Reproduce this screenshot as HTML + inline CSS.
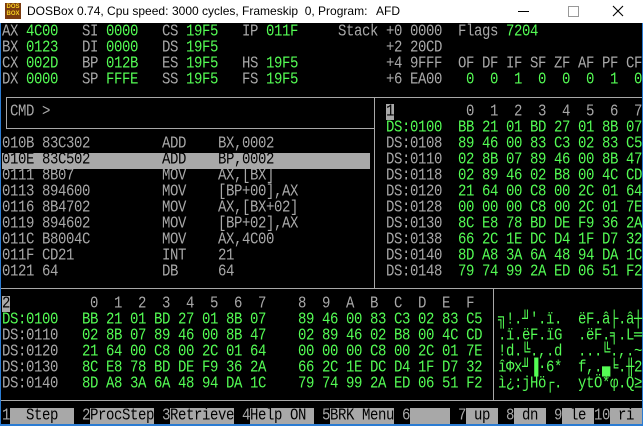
<!DOCTYPE html>
<html><head><meta charset="utf-8">
<style>
html,body{margin:0;padding:0;}
body{width:643px;height:426px;position:relative;overflow:hidden;background:#000;}
#tb{position:absolute;left:0;top:0;width:643px;height:23px;background:#fff;}
.tt{position:absolute;top:4px;font:12px "Liberation Sans","DejaVu Sans",sans-serif;color:#000;white-space:pre;}
.t{position:absolute;height:16px;line-height:16px;font-family:"Liberation Mono","DejaVu Sans Mono",monospace;font-size:14px;letter-spacing:-0.4px;white-space:pre;color:#a8a8a8;transform:scaleY(1.2);transform-origin:0 50%;}
.g{color:#54fc54;}
.k{color:#000;}
.ln{position:absolute;background:#a8a8a8;}
.gb{position:absolute;background:#a8a8a8;height:16px;top:408px;}
.bl{position:absolute;background:#2b7cd3;}
</style></head><body>
<div id="tb">
  <div style="position:absolute;left:5px;top:3px;width:16px;height:16px;background:#7a3b10;"></div>
  <div style="position:absolute;left:6px;top:4px;width:14px;font:bold 6px 'Liberation Sans',sans-serif;color:#f8d020;line-height:7px;text-align:center;">DOS<br>BOX</div>
  <div class="tt" style="left:27px;">DOSBox 0.74, Cpu speed:</div>
  <div class="tt" style="left:172px;">3000 cycles, Frameskip&nbsp; 0, Program:</div>
  <div class="tt" style="left:376px;">AFD</div>
  <div style="position:absolute;left:518px;top:11px;width:11px;height:1px;background:#000;"></div>
  <div style="position:absolute;left:568px;top:6px;width:9px;height:9px;border:1px solid #999;"></div>
  <svg style="position:absolute;left:612px;top:5px" width="12" height="12"><path d="M1 1L11 11M11 1L1 11" stroke="#000" stroke-width="1.1"/></svg>
</div>
<div class="bl" style="left:0;top:23px;width:1px;height:403px;"></div>
<div class="bl" style="left:642px;top:23px;width:1px;height:403px;"></div>
<div class="bl" style="left:0;top:424px;width:643px;height:2px;"></div>

<div class="t" style="left:2px;top:24px;">AX </div><div class="t g" style="left:26px;top:24px;">4C00</div>
<div class="t" style="left:82px;top:24px;">SI </div><div class="t g" style="left:106px;top:24px;">0000</div>
<div class="t" style="left:162px;top:24px;">CS </div><div class="t g" style="left:186px;top:24px;">19F5</div>
<div class="t" style="left:242px;top:24px;">IP </div><div class="t g" style="left:266px;top:24px;">011F</div>
<div class="t" style="left:338px;top:24px;">Stack +0 0000  Flags </div><div class="t g" style="left:506px;top:24px;">7204</div>

<div class="t" style="left:2px;top:40px;">BX </div><div class="t g" style="left:26px;top:40px;">0123</div>
<div class="t" style="left:82px;top:40px;">DI </div><div class="t g" style="left:106px;top:40px;">0000</div>
<div class="t" style="left:162px;top:40px;">DS </div><div class="t g" style="left:186px;top:40px;">19F5</div>
<div class="t" style="left:386px;top:40px;">+2 20CD</div>

<div class="t" style="left:2px;top:56px;">CX </div><div class="t g" style="left:26px;top:56px;">002D</div>
<div class="t" style="left:82px;top:56px;">BP </div><div class="t g" style="left:106px;top:56px;">012B</div>
<div class="t" style="left:162px;top:56px;">ES </div><div class="t g" style="left:186px;top:56px;">19F5</div>
<div class="t" style="left:242px;top:56px;">HS </div><div class="t g" style="left:266px;top:56px;">19F5</div>
<div class="t" style="left:386px;top:56px;">+4 9FFF  OF DF IF SF ZF AF PF CF</div>

<div class="t" style="left:2px;top:72px;">DX </div><div class="t g" style="left:26px;top:72px;">0000</div>
<div class="t" style="left:82px;top:72px;">SP </div><div class="t g" style="left:106px;top:72px;">FFFE</div>
<div class="t" style="left:162px;top:72px;">SS </div><div class="t g" style="left:186px;top:72px;">19F5</div>
<div class="t" style="left:242px;top:72px;">FS </div><div class="t g" style="left:266px;top:72px;">19F5</div>
<div class="t" style="left:386px;top:72px;">+6 EA00</div>
<div class="t g" style="left:466px;top:72px;">0  0  1  0  0  0  1  0</div>

<div class="ln" style="left:6px;top:97px;width:636px;height:1px;"></div>
<div class="ln" style="left:6px;top:97px;width:1px;height:32px;"></div>
<div class="ln" style="left:6px;top:128px;width:368px;height:1px;"></div>
<div class="ln" style="left:374px;top:97px;width:1px;height:191px;"></div>
<div class="ln" style="left:1px;top:288px;width:641px;height:1px;"></div>
<div class="ln" style="left:493px;top:288px;width:1px;height:112px;"></div>
<div class="ln" style="left:1px;top:400px;width:641px;height:1px;"></div>

<div class="t" style="left:10px;top:104px;">CMD &gt;</div>
<div style="position:absolute;left:2px;top:153px;width:368px;height:16px;background:#a8a8a8;"></div>
<div class="t" style="left:2px;top:136px;">010B 83C302</div><div class="t" style="left:162px;top:136px;">ADD</div><div class="t" style="left:218px;top:136px;">BX,0002</div>
<div class="t k" style="left:2px;top:152px;">010E 83C502</div><div class="t k" style="left:162px;top:152px;">ADD</div><div class="t k" style="left:218px;top:152px;">BP,0002</div>
<div class="t" style="left:2px;top:168px;">0111 8B07</div><div class="t" style="left:162px;top:168px;">MOV</div><div class="t" style="left:218px;top:168px;">AX,[BX]</div>
<div class="t" style="left:2px;top:184px;">0113 894600</div><div class="t" style="left:162px;top:184px;">MOV</div><div class="t" style="left:218px;top:184px;">[BP+00],AX</div>
<div class="t" style="left:2px;top:200px;">0116 8B4702</div><div class="t" style="left:162px;top:200px;">MOV</div><div class="t" style="left:218px;top:200px;">AX,[BX+02]</div>
<div class="t" style="left:2px;top:216px;">0119 894602</div><div class="t" style="left:162px;top:216px;">MOV</div><div class="t" style="left:218px;top:216px;">[BP+02],AX</div>
<div class="t" style="left:2px;top:232px;">011C B8004C</div><div class="t" style="left:162px;top:232px;">MOV</div><div class="t" style="left:218px;top:232px;">AX,4C00</div>
<div class="t" style="left:2px;top:248px;">011F CD21</div><div class="t" style="left:162px;top:248px;">INT</div><div class="t" style="left:218px;top:248px;">21</div>
<div class="t" style="left:2px;top:264px;">0121 64</div><div class="t" style="left:162px;top:264px;">DB</div><div class="t" style="left:218px;top:264px;">64</div>

<div style="position:absolute;left:386px;top:104px;width:8px;height:16px;background:#a8a8a8;"></div>
<div class="t k" style="left:386px;top:104px;">1</div>
<div class="t" style="left:466px;top:104px;">0  1  2  3  4  5  6  7</div>
<div class="t g" style="left:386px;top:120px;">DS:0100</div><div class="t g" style="left:458px;top:120px;">BB 21 01 BD 27 01 8B 07</div>
<div class="t" style="left:386px;top:136px;">DS:0108</div><div class="t g" style="left:458px;top:136px;">89 46 00 83 C3 02 83 C5</div>
<div class="t" style="left:386px;top:152px;">DS:0110</div><div class="t g" style="left:458px;top:152px;">02 8B 07 89 46 00 8B 47</div>
<div class="t" style="left:386px;top:168px;">DS:0118</div><div class="t g" style="left:458px;top:168px;">02 89 46 02 B8 00 4C CD</div>
<div class="t" style="left:386px;top:184px;">DS:0120</div><div class="t g" style="left:458px;top:184px;">21 64 00 C8 00 2C 01 64</div>
<div class="t" style="left:386px;top:200px;">DS:0128</div><div class="t g" style="left:458px;top:200px;">00 00 00 C8 00 2C 01 7E</div>
<div class="t" style="left:386px;top:216px;">DS:0130</div><div class="t g" style="left:458px;top:216px;">8C E8 78 BD DE F9 36 2A</div>
<div class="t" style="left:386px;top:232px;">DS:0138</div><div class="t g" style="left:458px;top:232px;">66 2C 1E DC D4 1F D7 32</div>
<div class="t" style="left:386px;top:248px;">DS:0140</div><div class="t g" style="left:458px;top:248px;">8D A8 3A 6A 48 94 DA 1C</div>
<div class="t" style="left:386px;top:264px;">DS:0148</div><div class="t g" style="left:458px;top:264px;">79 74 99 2A ED 06 51 F2</div>

<div style="position:absolute;left:2px;top:296px;width:8px;height:16px;background:#a8a8a8;"></div>
<div class="t k" style="left:2px;top:296px;">2</div>
<div class="t" style="left:90px;top:296px;">0  1  2  3  4  5  6  7    8  9  A  B  C  D  E  F</div>
<div class="t g" style="left:2px;top:312px;">DS:0100</div><div class="t g" style="left:82px;top:312px;">BB 21 01 BD 27 01 8B 07    89 46 00 83 C3 02 83 C5</div>
<div class="t" style="left:2px;top:328px;">DS:0110</div><div class="t g" style="left:82px;top:328px;">02 8B 07 89 46 00 8B 47    02 89 46 02 B8 00 4C CD</div>
<div class="t" style="left:2px;top:344px;">DS:0120</div><div class="t g" style="left:82px;top:344px;">21 64 00 C8 00 2C 01 64    00 00 00 C8 00 2C 01 7E</div>
<div class="t" style="left:2px;top:360px;">DS:0130</div><div class="t g" style="left:82px;top:360px;">8C E8 78 BD DE F9 36 2A    66 2C 1E DC D4 1F D7 32</div>
<div class="t" style="left:2px;top:376px;">DS:0140</div><div class="t g" style="left:82px;top:376px;">8D A8 3A 6A 48 94 DA 1C    79 74 99 2A ED 06 51 F2</div>

<div class="t g" style="left:498px;top:312px;">╗!.╜'.ï.</div><div class="t g" style="left:578px;top:312px;">ëF.â├.â┼</div>
<div class="t g" style="left:498px;top:328px;">.ï.ëF.ïG</div><div class="t g" style="left:578px;top:328px;">.ëF.╕.L═</div>
<div class="t g" style="left:498px;top:344px;">!d.╚.,.d</div><div class="t g" style="left:578px;top:344px;">...╚.,.~</div>
<div class="t g" style="left:498px;top:360px;">îΦx╜▐·6*</div><div class="t g" style="left:578px;top:360px;">f,.▄╘.╫2</div>
<div class="t g" style="left:498px;top:376px;">ì¿:jHö┌.</div><div class="t g" style="left:578px;top:376px;">ytÖ*φ.Q≥</div>

<div class="gb" style="left:10px;width:64px;"></div>
<div class="gb" style="left:90px;width:64px;"></div>
<div class="gb" style="left:170px;width:64px;"></div>
<div class="gb" style="left:250px;width:64px;"></div>
<div class="gb" style="left:330px;width:64px;"></div>
<div class="gb" style="left:410px;width:40px;"></div>
<div class="gb" style="left:466px;width:32px;"></div>
<div class="gb" style="left:514px;width:32px;"></div>
<div class="gb" style="left:562px;width:32px;"></div>
<div class="gb" style="left:610px;width:32px;"></div>
<div class="t" style="left:2px;top:408px;">1</div><div class="t k" style="left:10px;top:408px;">  Step</div>
<div class="t" style="left:82px;top:408px;">2</div><div class="t k" style="left:90px;top:408px;">ProcStep</div>
<div class="t" style="left:162px;top:408px;">3</div><div class="t k" style="left:170px;top:408px;">Retrieve</div>
<div class="t" style="left:242px;top:408px;">4</div><div class="t k" style="left:250px;top:408px;">Help ON</div>
<div class="t" style="left:322px;top:408px;">5</div><div class="t k" style="left:330px;top:408px;">BRK Menu</div>
<div class="t" style="left:402px;top:408px;">6</div>
<div class="t" style="left:458px;top:408px;">7</div><div class="t k" style="left:466px;top:408px;"> up</div>
<div class="t" style="left:506px;top:408px;">8</div><div class="t k" style="left:514px;top:408px;"> dn</div>
<div class="t" style="left:554px;top:408px;">9</div><div class="t k" style="left:562px;top:408px;"> le</div>
<div class="t" style="left:594px;top:408px;">10</div><div class="t k" style="left:610px;top:408px;"> ri</div>
</body></html>
